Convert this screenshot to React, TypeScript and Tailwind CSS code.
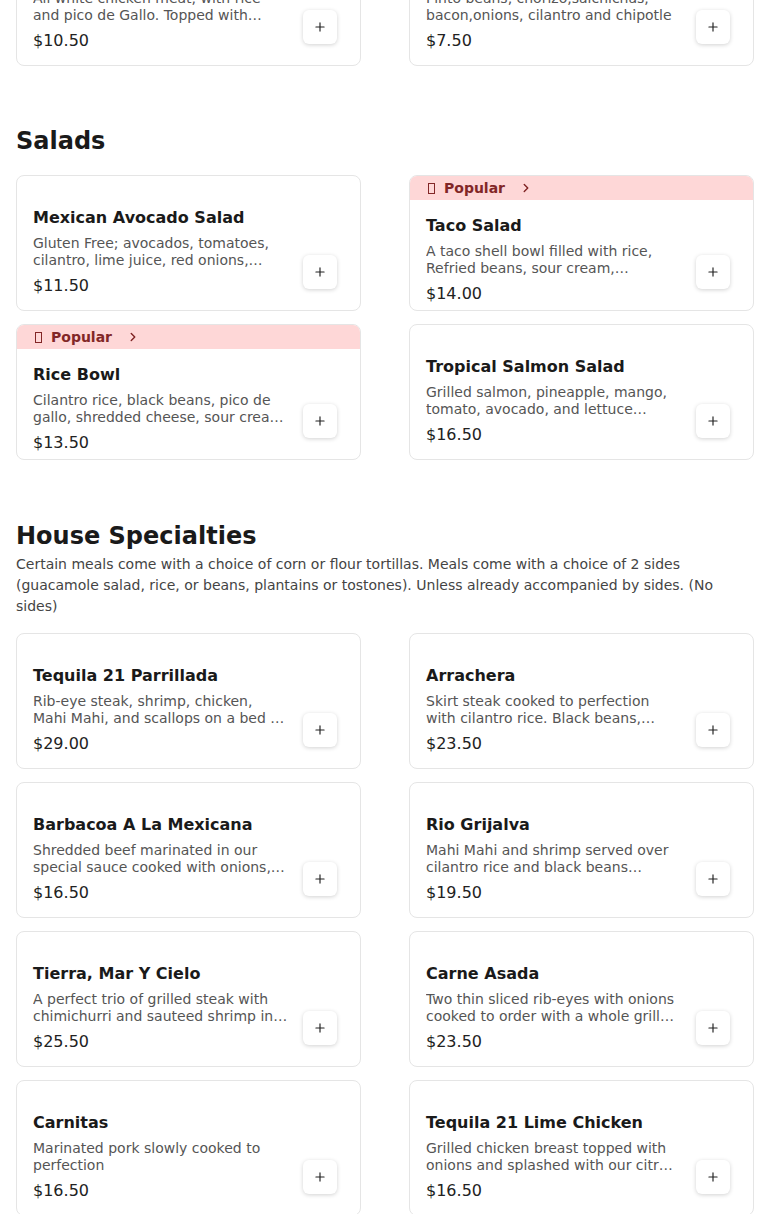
import { ChevronRight, Plus } from 'lucide-react';

interface MenuItem {
  name: string;
  description: string;
  price: string;
  popular?: boolean;
}

interface Section {
  title?: string;
  note?: string;
  items: MenuItem[];
}

const sections: Section[] = [
  {
    items: [
      {
        name: 'Chicken Burrito',
        description: 'All white chicken meat, with rice and pico de Gallo. Topped with…',
        price: '$10.50'
      },
      {
        name: 'Frijoles Charros',
        description: 'Pinto beans, chorizo,salchichas, bacon,onions, cilantro and chipotle',
        price: '$7.50'
      }
    ]
  },
  {
    title: 'Salads',
    items: [
      {
        name: 'Mexican Avocado Salad',
        description: 'Gluten Free; avocados, tomatoes, cilantro, lime juice, red onions,…',
        price: '$11.50'
      },
      {
        name: 'Taco Salad',
        description: 'A taco shell bowl filled with rice, Refried beans, sour cream,…',
        price: '$14.00',
        popular: true
      },
      {
        name: 'Rice Bowl',
        description: 'Cilantro rice, black beans, pico de gallo, shredded cheese, sour crea…',
        price: '$13.50',
        popular: true
      },
      {
        name: 'Tropical Salmon Salad',
        description: 'Grilled salmon, pineapple, mango, tomato, avocado, and lettuce…',
        price: '$16.50'
      }
    ]
  },
  {
    title: 'House Specialties',
    note: 'Certain meals come with a choice of corn or flour tortillas. Meals come with a choice of 2 sides (guacamole salad, rice, or beans, plantains or tostones). Unless already accompanied by sides. (No sides)',
    items: [
      {
        name: 'Tequila 21 Parrillada',
        description: 'Rib-eye steak, shrimp, chicken, Mahi Mahi, and scallops on a bed …',
        price: '$29.00'
      },
      {
        name: 'Arrachera',
        description: 'Skirt steak cooked to perfection with cilantro rice. Black beans,…',
        price: '$23.50'
      },
      {
        name: 'Barbacoa A La Mexicana',
        description: 'Shredded beef marinated in our special sauce cooked with onions,…',
        price: '$16.50'
      },
      {
        name: 'Rio Grijalva',
        description: 'Mahi Mahi and shrimp served over cilantro rice and black beans…',
        price: '$19.50'
      },
      {
        name: 'Tierra, Mar Y Cielo',
        description: 'A perfect trio of grilled steak with chimichurri and sauteed shrimp in…',
        price: '$25.50'
      },
      {
        name: 'Carne Asada',
        description: 'Two thin sliced rib-eyes with onions cooked to order with a whole grill…',
        price: '$23.50'
      },
      {
        name: 'Carnitas',
        description: 'Marinated pork slowly cooked to perfection',
        price: '$16.50'
      },
      {
        name: 'Tequila 21 Lime Chicken',
        description: 'Grilled chicken breast topped with onions and splashed with our citr…',
        price: '$16.50'
      }
    ]
  }
];

function ItemCard({ item }: { item: MenuItem }) {
  return (
    <div className="flex h-[136px] flex-col overflow-hidden rounded-lg border border-[#e5e5e5] bg-white">
      {item.popular && (
        <div className="flex h-6 shrink-0 items-center bg-[#fed7d7] pl-[18px] text-sm font-bold text-[#822727]">
          <span className="inline-block h-[11px] w-[7px] border border-[#822727]" />
          <span className="ml-[9px]">Popular</span>
          <ChevronRight className="ml-[14px] h-[14px] w-[14px]" strokeWidth={2.5} />
        </div>
      )}
      <div className={`flex flex-1 items-start gap-[14px] pl-4 pr-[23px] ${item.popular ? 'pt-[14px]' : 'pt-[30px]'}`}>
        <div className="min-w-0 flex-1">
          <h3 className="text-base leading-6 font-bold text-[#1a1a1a]">{item.name}</h3>
          <p className="mt-[5px] line-clamp-2 text-sm leading-[17px] text-[#555555]">{item.description}</p>
          <p className="mt-[5px] text-base leading-6 text-[#222222]">{item.price}</p>
        </div>
        <button className={`${item.popular ? 'mt-[41px]' : 'mt-[49px]'} flex h-[34px] w-[34px] shrink-0 items-center justify-center rounded-md bg-white shadow-[0_1px_4px_rgba(0,0,0,0.18)]`}>
          <Plus className="h-[14px] w-[14px] text-[#222222]" strokeWidth={2} />
        </button>
      </div>
    </div>
  );
}

export default function App() {
  return (
    <div className="min-h-screen bg-white px-4 font-['DejaVu_Sans',sans-serif]">
      {sections.map((section, index) => (
        <section key={index} className={index === 0 ? '-mt-[70px]' : section.note ? 'mt-[60px]' : 'mt-[59px]'}>
          {section.title && (
            <h2 className={`text-2xl leading-8 font-bold text-[#1a1a1a] ${section.note ? 'mb-[2px]' : 'mb-[18px]'}`}>
              {section.title}
            </h2>
          )}
          {section.note && (
            <p className="mb-[16px] text-sm leading-[21px] text-[#444444]">{section.note}</p>
          )}
          <div className="grid grid-cols-2 gap-x-12 gap-y-[13px]">
            {section.items.map(item => (
              <ItemCard key={item.name} item={item} />
            ))}
          </div>
        </section>
      ))}
    </div>
  );
}
